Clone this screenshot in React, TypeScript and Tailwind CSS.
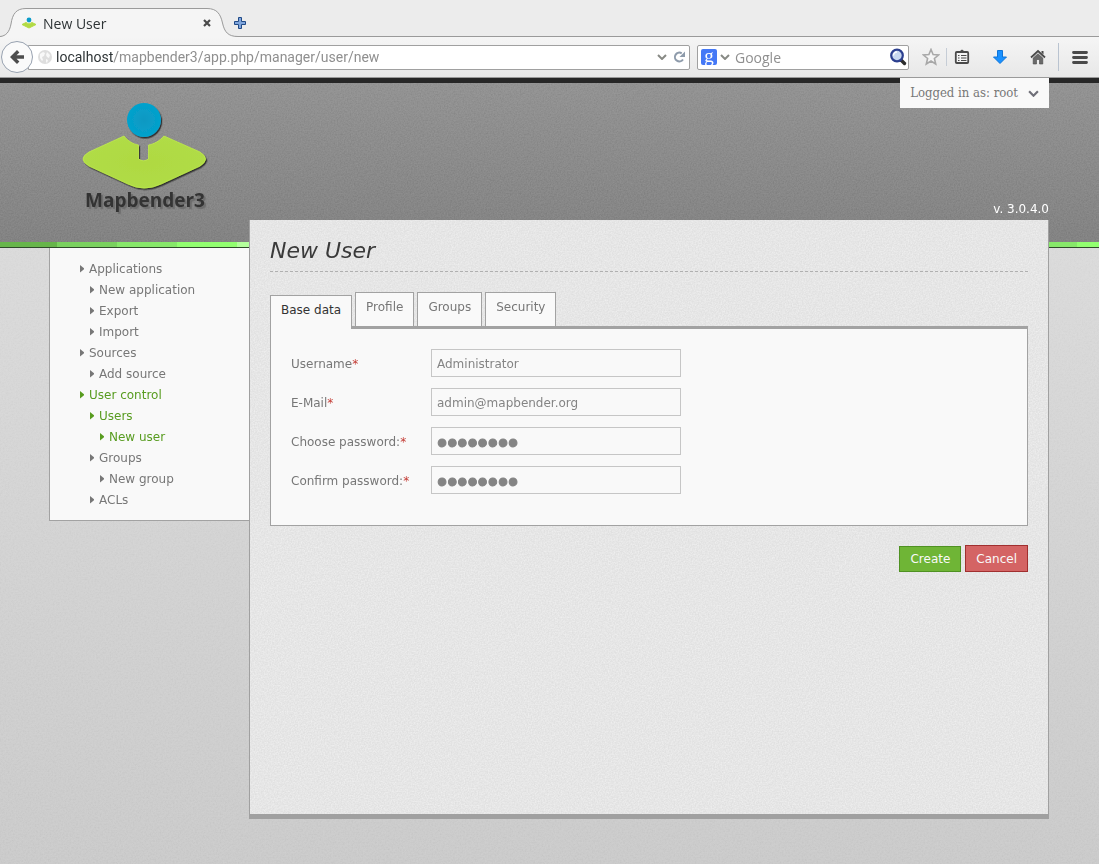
import React, { useState } from "react";

type NavItem = { label: string; level: 0 | 1 | 2; active?: boolean };

const NAV: NavItem[] = [
  { label: "Applications", level: 0 },
  { label: "New application", level: 1 },
  { label: "Export", level: 1 },
  { label: "Import", level: 1 },
  { label: "Sources", level: 0 },
  { label: "Add source", level: 1 },
  { label: "User control", level: 0, active: true },
  { label: "Users", level: 1, active: true },
  { label: "New user", level: 2, active: true },
  { label: "Groups", level: 1 },
  { label: "New group", level: 2 },
  { label: "ACLs", level: 1 },
];

const INDENT = { 0: "pl-[30px]", 1: "pl-10", 2: "pl-[50px]" };

const TABS = ["Base data", "Profile", "Groups", "Security"];

const FIELDS = [
  { id: "username", label: "Username", type: "text", value: "Administrator" },
  { id: "email", label: "E-Mail", type: "email", value: "admin@mapbender.org" },
  { id: "password", label: "Choose password:", type: "password", value: "password" },
  { id: "confirm", label: "Confirm password:", type: "password", value: "password" },
];

/* Fine paper grain laid over a surface. */
function Grain({ id, frequency, className }: { id: string; frequency: string; className: string }) {
  return (
    <svg aria-hidden="true" className={`pointer-events-none absolute inset-0 h-full w-full ${className}`}>
      <filter id={id} x="0" y="0" width="100%" height="100%" colorInterpolationFilters="sRGB">
        <feTurbulence type="fractalNoise" baseFrequency={frequency} numOctaves="2" stitchTiles="stitch" />
        <feColorMatrix values="1 0 0 0 0  1 0 0 0 0  1 0 0 0 0  0 0 0 0 1" />
      </filter>
      <rect width="100%" height="100%" filter={`url(#${id})`} />
    </svg>
  );
}

function Chevron({ className, strokeWidth = 2 }: { className: string; strokeWidth?: number }) {
  return (
    <svg viewBox="0 0 10 6" className={className} fill="none" stroke="currentColor" strokeWidth={strokeWidth}>
      <path d="M1 1l4 4 4-4" />
    </svg>
  );
}

function TabStrip() {
  return (
    <div className="relative flex h-[37px] items-end border-b border-[#9a9a9a] bg-[#ececec]">
      <div className="relative -mb-px flex h-[29px] w-[238px] shrink-0 items-center pr-[27px] pl-[21px]">
        <svg viewBox="0 0 238 29" className="absolute inset-0 h-full w-full" fill="none">
          <path
            d="M0 28.500C6 28 9.500 24 11 16C12.500 6 16 .5 26 .5H207C217 .5 220.500 6 222.500 15C224.500 24 228 28.500 238 28.500V29H0Z"
            fill="#f5f5f5"
          />
          <path
            d="M0 28.500C6 28 9.500 24 11 16C12.500 6 16 .5 26 .5H207C217 .5 220.500 6 222.500 15C224.500 24 228 28.500 238 28.500"
            stroke="#9a9a9a"
          />
        </svg>
        <svg viewBox="0 0 16 12" className="relative h-3 w-4">
          <path d="M1 7.500 5 5.500Q8 8.500 11 5.500L15 7.500 8 11Z" fill="#b2da44" stroke="#b2da44" strokeLinejoin="round" />
          <circle cx="8" cy="3" r="2.400" fill="#0b9cc9" />
        </svg>
        <span className="relative ml-[6px] flex-1 pt-[2px] text-[14px] text-[#2e3436]">New User</span>
        <button type="button" aria-label="Close tab" className="relative size-2">
          <svg viewBox="0 0 8 8" className="size-2" stroke="#4a4a4a" strokeWidth="2.200">
            <path d="M1 1l6 6M7 1L1 7" />
          </svg>
        </button>
      </div>
      <button type="button" aria-label="New tab" className="mb-[7px] ml-[-4px] size-3">
        <svg viewBox="0 0 12 12" className="size-3">
          <path d="M4.500 .5h3v4h4v3h-4v4h-3v-4h-4v-3h4Z" fill="#7fa5dc" stroke="#204a87" strokeLinejoin="round" />
        </svg>
      </button>
    </div>
  );
}

function Toolbar() {
  return (
    <div className="relative flex h-[41px] items-center border-b border-[#9a9a9a] bg-gradient-to-b from-[#f5f5f5] to-[#e8e8e8] pr-[11px]">
      <button
        type="button"
        aria-label="Back"
        className="relative z-10 ml-px flex size-8 shrink-0 items-center justify-center rounded-full border border-[#98a2b0] bg-[#fafafa]"
      >
        <svg viewBox="0 0 16 16" className="size-4" fill="#4d4d4d">
          <path d="M1 8 8 1l2.400 2.400L7.500 6.200H15v3.600H7.500l2.900 2.800L8 15Z" />
        </svg>
      </button>
      <div className="-ml-[5px] flex h-[25px] flex-1 items-center rounded-r-[2px] border border-[#a0a0a0] bg-white pr-1 pl-[9px]">
        <svg viewBox="0 0 14 14" className="size-[14px] shrink-0">
          <circle cx="7" cy="7" r="7" fill="#dedede" />
          <path d="M2 4l3-2 2 1-1 3-2 1 1 3-1 1-2-3ZM9 2l3 3-1 3-2-1-1-2ZM8 9l2 1-1 3-1-1Z" fill="#f8f8f8" />
        </svg>
        <div className="ml-[4px] flex-1 pt-px font-['Roboto','Noto_Sans',sans-serif] text-[14px] text-[#8f8f8f]">
          <span className="text-[#2e3436]">localhost</span>/mapbender3/app.php/manager/user/new
        </div>
        <button type="button" aria-label="Show history">
          <Chevron className="h-[6px] w-[10px] text-[#888a85]" />
        </button>
        <button type="button" aria-label="Reload" className="ml-[6px]">
          <svg viewBox="0 0 12 12" className="size-3" fill="none" stroke="#8e9bab" strokeWidth="2">
            <path d="M8.700 2.300A4.400 4.400 0 1 0 10 8.500" />
            <path d="M12 .5V6H6.500Z" fill="#8e9bab" stroke="none" />
          </svg>
        </button>
      </div>
      <form className="ml-[7px] flex h-[25px] w-[212px] shrink-0 items-center rounded-[2px] border border-[#a0a0a0] bg-white pr-px pl-[3px]">
        <span
          aria-hidden="true"
          className="flex size-4 shrink-0 items-center justify-center rounded-[2px] bg-[#4478f6] pb-[3px] font-['Liberation_Serif',serif] text-[19px] leading-none text-white"
        >
          g
        </span>
        <Chevron className="ml-[3px] h-[6px] w-[10px] shrink-0 text-[#888a85]" />
        <input
          aria-label="Search with Google"
          placeholder="Google"
          className="ml-[5px] min-w-0 flex-1 bg-transparent pt-px text-[14px] outline-none placeholder:text-[#8f8f8f]"
        />
        <button type="button" aria-label="Search">
          <svg viewBox="0 0 18 18" className="size-[18px]" fill="none">
            <path d="M12 12l3.500 3.500" stroke="#2e2e2e" strokeWidth="3.400" strokeLinecap="round" />
            <circle cx="8" cy="7.500" r="5.800" fill="#c9d8f0" stroke="#2c3f8f" strokeWidth="2.200" />
            <path d="M4.500 7.500a3.500 3.500 0 0 1 3.500-3.500" stroke="#fff" strokeWidth="1.500" />
          </svg>
        </button>
      </form>
      <button type="button" aria-label="Bookmark this page" className="ml-[13px]">
        <svg viewBox="0 0 18 18" className="size-[18px]" fill="#f4f4f4" stroke="#a8a8a8" strokeWidth="1.600">
          <path d="M9 1.500l2.100 5 5.400.5-4.100 3.500 1.300 5.500L9 13l-4.700 3 1.300-5.500L1.500 7l5.400-.5Z" />
        </svg>
      </button>
      <span className="ml-[6px] h-[18px] w-px bg-[#c6cdd6]" />
      <button type="button" aria-label="Show bookmarks" className="ml-[7px]">
        <svg viewBox="0 0 16 16" className="size-4">
          <rect x="1.800" y="3" width="12.400" height="11" rx="1" fill="#f4f4f4" stroke="#4a4a4a" strokeWidth="1.800" />
          <path d="M4 3.500 8 .5l4 3Z" fill="#4a4a4a" />
          <path d="M4 6.500h1.500M7 6.500h5.500M4 9h1.500M7 9h5.500M4 11.500h1.500M7 11.500h5.500" stroke="#4a4a4a" strokeWidth="1.200" />
        </svg>
      </button>
      <button type="button" aria-label="Downloads" className="ml-[22px]">
        <svg viewBox="0 0 16 16" className="size-4">
          <path d="M5.500 1.500h5V8h4L8 14.500 1.500 8h4Z" fill="#1a91ff" stroke="#0f74d8" strokeLinejoin="round" />
        </svg>
      </button>
      <button type="button" aria-label="Home" className="ml-[22px]">
        <svg viewBox="0 0 16 16" className="size-4" fill="none">
          <path d="M1 8.500 8 2l7 6.500" stroke="#4a4a4a" strokeWidth="1.800" />
          <path d="M3.200 9 8 4.700 12.800 9v6H9.500v-4.500h-3V15H3.200Z" fill="#6a6a6a" stroke="#4a4a4a" strokeWidth=".6" />
          <path d="M11.500 2h2v3.500l-2-1.800Z" fill="#4a4a4a" />
        </svg>
      </button>
      <span className="ml-[12px] h-7 w-px bg-[#b9c3d0]" />
      <button type="button" aria-label="Open menu" className="ml-[13px]">
        <svg viewBox="0 0 16 13" className="h-[13px] w-4" stroke="#4a4a4a" strokeWidth="2.800" strokeLinecap="round">
          <path d="M1.500 1.500h13M1.500 6.500h13M1.500 11.500h13" />
        </svg>
      </button>
    </div>
  );
}

function Logo() {
  return (
    <a href="#home" className="relative block w-[126px]">
      <svg viewBox="0 0 126 90" className="h-[90px] w-[126px] overflow-visible">
        <defs>
          <filter id="logo-shadow" x="-10%" y="-10%" width="120%" height="120%">
            <feDropShadow dx="1.200" dy="1.500" stdDeviation=".6" floodColor="#222" floodOpacity=".85" />
          </filter>
          <radialGradient id="logo-lime">
            <stop offset="0" stopColor="#afd942" />
            <stop offset="1" stopColor="#b0dc46" />
          </radialGradient>
          <radialGradient id="logo-blue">
            <stop offset="0" stopColor="#0b98c2" />
            <stop offset="1" stopColor="#04a2cd" />
          </radialGradient>
        </defs>
        <g filter="url(#logo-shadow)">
          <circle cx="62" cy="18" r="17" fill="url(#logo-blue)" />
          <path
            d="M42 34C46 39 51 42 56.500 43V57Q61.500 60.500 66.500 57V43C72 42 77.500 39 82 34L118 50Q129 57 118 64L79 82Q62 90 46 82L7 64Q-5 57 7 50Z"
            fill="url(#logo-lime)"
            stroke="#c0ec4c"
            strokeWidth=".8"
          />
        </g>
      </svg>
      <span className="-mt-1 block text-center font-['Open_Sans','Liberation_Sans',sans-serif] text-[19px] leading-[24px] font-bold text-[#333] [text-shadow:2px_2px_1px_#6d6d6d]">
        Mapbender3
      </span>
    </a>
  );
}

function Header() {
  return (
    <header className="relative">
      <div className="relative border-t-[5px] border-[#272727] bg-gradient-to-b from-[#939393] to-[#838383]">
        <Grain id="grain-header" frequency="0.7" className="opacity-20 mix-blend-soft-light" />
        <div className="relative mx-auto flex h-[159px] w-full items-start justify-between px-[50px]">
          <div className="pt-[19px] pl-8">
            <Logo />
          </div>
          <div className="-mt-[5px] flex h-[139px] flex-col items-end justify-between">
            <button
              type="button"
              className="flex h-[30px] items-center gap-[10px] bg-[#f9f9f9] px-[10px] font-['DejaVu_Serif_Condensed','DejaVu_Serif',serif] text-[13px] text-[#777]"
            >
              Logged in as: root
              <Chevron className="h-[7px] w-[11px] text-[#6f6f78]" />
            </button>
            <span className="text-[12px] leading-4 text-white">v. 3.0.4.0</span>
          </div>
        </div>
      </div>
      <div className="h-[6px] border-b border-[#2f4a2a] bg-[repeating-linear-gradient(90deg,#67b54b_0_57px,#7ad15f_57px_117px,#87e86a_117px_177px,#92ff70_177px_237px,#b4ff9c_237px_297px,#67b54b_297px_300px)]" />
    </header>
  );
}

function Sidebar() {
  return (
    <nav className="mt-7 w-[200px] shrink-0 self-start border-b border-l border-[#a2a2a2] bg-[#f9f9f9] py-[10px]">
      <ul>
        {NAV.map((item) => (
          <li key={item.label} className={INDENT[item.level]}>
            <a
              href="#nav"
              className={`flex items-center gap-[5px] pt-px leading-5 ${item.active ? "text-[#589c20]" : "text-[#777]"}`}
            >
              <svg viewBox="0 0 4 8" className="h-2 w-1" fill="currentColor">
                <path d="M0 0L4 3.200V4.300L0 7.500Z" />
              </svg>
              {item.label}
            </a>
          </li>
        ))}
      </ul>
    </nav>
  );
}

function UserForm() {
  const [tab, setTab] = useState("Base data");
  return (
    <form>
      <div role="tablist" className="mt-5 flex items-end gap-[3px]">
        {TABS.map((name) => (
          <button
            key={name}
            type="button"
            role="tab"
            aria-selected={tab === name}
            onClick={() => setTab(name)}
            className={
              tab === name
                ? "relative z-10 -mb-[3px] h-[34px] border border-b-0 border-[#a2a2a2] bg-[#f9f9f9] px-[10px] pb-[5px] text-[#333]"
                : "h-[34px] border border-b-0 border-[#a2a2a2] bg-[#f9f9f9] px-[10px] pb-[5px] text-[#777]"
            }
          >
            {name}
          </button>
        ))}
      </div>
      <div className="flex flex-col gap-[11px] border border-t-[3px] border-[#a2a2a2] bg-[#f9f9f9] px-5 pt-5 pb-[31px]">
        {FIELDS.map((field) => (
          <div key={field.id} className="flex items-center">
            <label htmlFor={field.id} className="w-[140px] pt-[2px] text-[#777]">
              {field.label}
              <span className="text-[#c43c35]">*</span>
            </label>
            <input
              id={field.id}
              type={field.type}
              defaultValue={field.value}
              className={
                field.type === "password"
                  ? "h-7 w-[250px] border border-[#c6c6c6] bg-[#f9f9f9] px-[5px] pt-1 font-['Liberation_Sans',sans-serif] text-[29px] leading-[22px] text-[#848484] outline-none [-webkit-text-stroke:1px_#848484]"
                  : "h-7 w-[250px] border border-[#c6c6c6] bg-[#f9f9f9] px-[5px] pt-[2px] text-[#848484] outline-none"
              }
            />
          </div>
        ))}
      </div>
      <div className="mt-[19px] flex items-end justify-end gap-1">
        <button type="submit" className="h-[26px] border border-[#4f9122] bg-[#6fb536] px-[10px] text-[#f9f9f9]">
          Create
        </button>
        <button type="button" className="h-[27px] border border-[#a02f2f] bg-[#d46464] px-[10px] text-[#f9f9f9]">
          Cancel
        </button>
      </div>
    </form>
  );
}

export default function App() {
  return (
    <div className="flex min-h-screen flex-col font-['DejaVu_Sans',sans-serif] text-[12px]">
      <div className="font-['Open_Sans','Noto_Sans',sans-serif]">
        <TabStrip />
        <Toolbar />
      </div>
      <div className="relative flex flex-1 flex-col bg-gradient-to-b from-[#dfdfdf] to-[#cbcbcb]">
        <Grain id="grain-page" frequency="0.6" className="opacity-20 mix-blend-soft-light" />
        <Header />
        <div className="relative -mt-7 mb-[45px] flex flex-1 pr-[50px] pl-[49px]">
          <Sidebar />
          <main className="relative flex-1 border-x border-b-[5px] border-[#a0a0a0] bg-[#f2f2f2] px-5">
            <Grain id="grain-panel" frequency="0.7" className="opacity-10 mix-blend-multiply" />
            <div className="relative">
              <h1 className="border-b border-dashed border-[#b0b0b0] pt-4 pb-[5px] text-[22px] leading-[30px] text-[#3a3a3a] italic">
                New User
              </h1>
              <UserForm />
            </div>
          </main>
        </div>
      </div>
    </div>
  );
}
